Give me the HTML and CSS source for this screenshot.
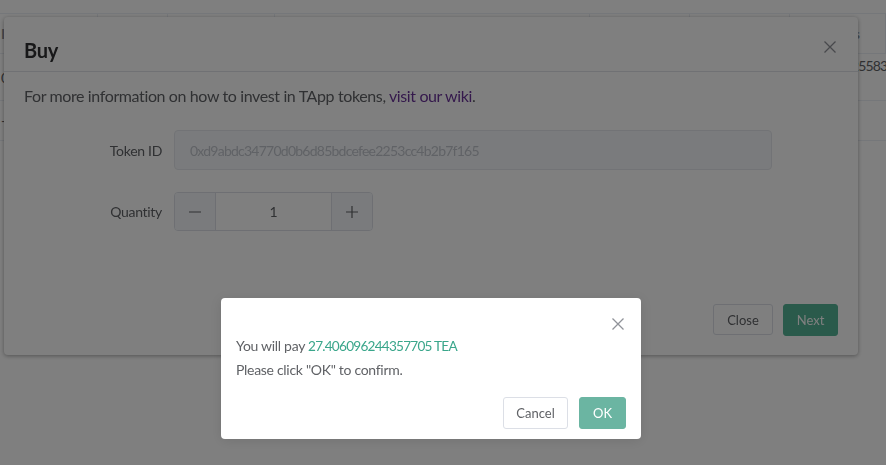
FILE: index.html
```html
<!DOCTYPE html>
<html>
<head>
<meta charset="utf-8">
<link rel="stylesheet" href="styles.css">
</head>
<body>
<div class="page">
  <div class="tbl">
    <div class="tr thead">
      <div class="cell">ID</div>
      <div class="cell">Name</div>
      <div class="cell">Ticker</div>
      <div class="cell">Detail</div>
      <div class="cell">Price</div>
      <div class="cell">Supply</div>
      <div class="cell cell-right">Holdings</div>
    </div>
    <div class="tr trow1">
      <div class="cell">0xd9ab</div>
      <div class="cell"></div>
      <div class="cell"></div>
      <div class="cell"></div>
      <div class="cell"></div>
      <div class="cell"></div>
      <div class="cell cell-top"><span class="num">1.255833</span></div>
    </div>
    <div class="tr trow2">
      <div class="cell">-</div>
      <div class="cell"></div>
      <div class="cell"></div>
      <div class="cell"></div>
      <div class="cell"></div>
      <div class="cell"></div>
      <div class="cell"></div>
    </div>
  </div>
</div>

<div class="dialog buy">
  <div class="buy-head">
    <span class="buy-title">Buy</span>
    <svg class="x-icon buy-x" width="12" height="12" viewBox="0 0 12 12"><path d="M0.5 0.5 L11.5 11.5 M11.5 0.5 L0.5 11.5" stroke="#909399" stroke-width="1.3" fill="none"/></svg>
  </div>
  <div class="buy-body">
    <p class="intro">For more information on how to invest in TApp tokens, <a class="wiki" href="#">visit our wiki</a>.</p>
    <div class="form-row first">
      <label class="label">Token ID</label>
      <div class="input disabled">0xd9abdc34770d0b6d85bdcefee2253cc4b2b7f165</div>
    </div>
    <div class="form-row">
      <label class="label">Quantity</label>
      <div class="num-input">
        <span class="step">
          <svg width="12" height="12" viewBox="0 0 12 12"><path d="M0 6 H12" stroke="#606266" stroke-width="1.2"/></svg>
        </span>
        <span class="num-val">1</span>
        <span class="step">
          <svg width="12" height="12" viewBox="0 0 12 12"><path d="M0 6 H12 M6 0 V12" stroke="#606266" stroke-width="1.2"/></svg>
        </span>
      </div>
    </div>
  </div>
  <div class="buy-foot">
    <button class="btn btn-close">Close</button>
    <button class="btn btn-next">Next</button>
  </div>
</div>

<div class="overlay"></div>

<div class="msgbox">
  <svg class="x-icon msg-x" width="12" height="12" viewBox="0 0 12 12"><path d="M0.5 0.5 L11.5 11.5 M11.5 0.5 L0.5 11.5" stroke="#909399" stroke-width="1.3" fill="none"/></svg>
  <div class="msg-content">
    <p class="msg-line">You will pay <span class="amount">27.406096244357705 TEA</span></p>
    <p class="msg-line">Please click "OK" to confirm.</p>
  </div>
  <div class="msg-btns">
    <button class="btn btn-cancel">Cancel</button>
    <button class="btn btn-ok">OK</button>
  </div>
</div>
</body>
</html>
```
FILE: styles.css
```css
* { box-sizing: border-box; }

html, body {
  margin: 0;
  width: 886px;
  height: 465px;
  overflow: hidden;
  background: #fff;
  font-family: Lato, "Noto Sans", sans-serif;
  color: #606266;
}

p { margin: 0; }

/* background table */
.page { padding-top: 13px; }
.tbl {
  border-top: 1px solid #ebeef5;
  font-size: 14px;
}
.tr {
  display: grid;
  grid-template-columns: 98px 70px 107px 315px 100px 100px 96px;
  border-bottom: 1px solid #ebeef5;
}
.thead { height: 40px; }
.trow1 { height: 47px; }
.trow2 { height: 40px; }
.cell {
  display: flex;
  align-items: center;
  padding-left: 3px;
  white-space: nowrap;
  overflow: hidden;
  color: #606266;
}
.cell:first-child { padding-left: 1px; }
.thead .cell {
  border-right: 1px solid #ebeef5;
  font-weight: 700;
  color: #909399;
}
.cell-right { justify-content: flex-end; padding-right: 25px; }
.cell-top { align-items: flex-start; padding-top: 3px; padding-left: 51px; }
.num { letter-spacing: -0.8px; }

/* buy dialog */
.dialog {
  position: fixed;
  left: 4px;
  top: 17px;
  width: 854px;
  height: 338px;
  background: #fff;
  border-radius: 4px;
  box-shadow: 0 1px 4px rgba(0,0,0,.35);
  display: flex;
  flex-direction: column;
}
.buy-head {
  position: relative;
  height: 55px;
  padding: 20px 20px 0;
  border-bottom: 1px solid #e1e3e8;
}
.buy-title {
  display: block;
  font-size: 20px;
  line-height: 26px;
  font-weight: 700;
  color: #303133;
  letter-spacing: -0.2px;
}
.x-icon { position: absolute; display: block; }
.buy-x { right: 22px; top: 24px; }

.buy-body { padding: 13px 20px 0; }
.intro {
  font-size: 16px;
  line-height: 22px;
  color: #606266;
  letter-spacing: -0.38px;
}
.wiki { color: #6a3399; text-decoration: none; }

.form-row {
  display: flex;
  align-items: center;
  margin-top: 22px;
}
.form-row.first { margin-top: 23px; }
.label {
  width: 150px;
  padding-right: 12px;
  text-align: right;
  font-size: 14px;
  color: #606266;
  letter-spacing: -0.3px;
}
.input {
  width: 598px;
  height: 40px;
  border: 1px solid #e4e7ed;
  border-radius: 4px;
  padding-left: 15px;
  display: flex;
  align-items: center;
  font-size: 14px;
  letter-spacing: -0.76px;
}
.input.disabled {
  background: #f5f7fa;
  color: #c0c4cc;
}
.num-input {
  width: 199px;
  height: 39px;
  border: 1px solid #dcdfe6;
  border-radius: 4px;
  display: flex;
  overflow: hidden;
}
.step {
  width: 41px;
  background: #f5f7fa;
  display: flex;
  align-items: center;
  justify-content: center;
}
.step:first-child { border-right: 1px solid #dcdfe6; }
.step:last-child { border-left: 1px solid #dcdfe6; }
.num-val {
  flex: 1;
  display: flex;
  align-items: center;
  justify-content: center;
  font-size: 14px;
  color: #606266;
}

.buy-foot {
  margin-top: auto;
  padding: 0 20px 19px;
  display: flex;
  justify-content: flex-end;
  gap: 10px;
}

.btn {
  height: 32px;
  border-radius: 3px;
  border: 1px solid #dcdfe6;
  background: #fff;
  font-family: inherit;
  font-size: 13px;
  color: #606266;
  padding: 0;
}
.btn-close { width: 60px; height: 31px; }
.btn-next { width: 55px; background: #54b496; border-color: #54b496; color: #fff; }

.overlay {
  position: fixed;
  inset: 0;
  background: rgba(0,0,0,.5);
}

/* message box */
.msgbox {
  position: fixed;
  left: 221px;
  top: 298px;
  width: 420px;
  height: 141px;
  background: #fff;
  border-radius: 4px;
  box-shadow: 0 2px 12px rgba(0,0,0,.1);
  padding: 36px 15px 10px;
}
.msg-x { right: 17px; top: 20px; }
.msg-line {
  font-size: 14px;
  line-height: 24px;
  color: #606266;
  letter-spacing: -0.3px;
}
.amount { color: #3aa68b; letter-spacing: -0.75px; font-size: 13.6px; }
.msg-btns {
  margin-top: 15px;
  display: flex;
  justify-content: flex-end;
  gap: 11px;
}
.btn-cancel { width: 65px; }
.btn-ok { width: 47px; background: #6bb5a2; border-color: #6bb5a2; color: #fff; }
```
